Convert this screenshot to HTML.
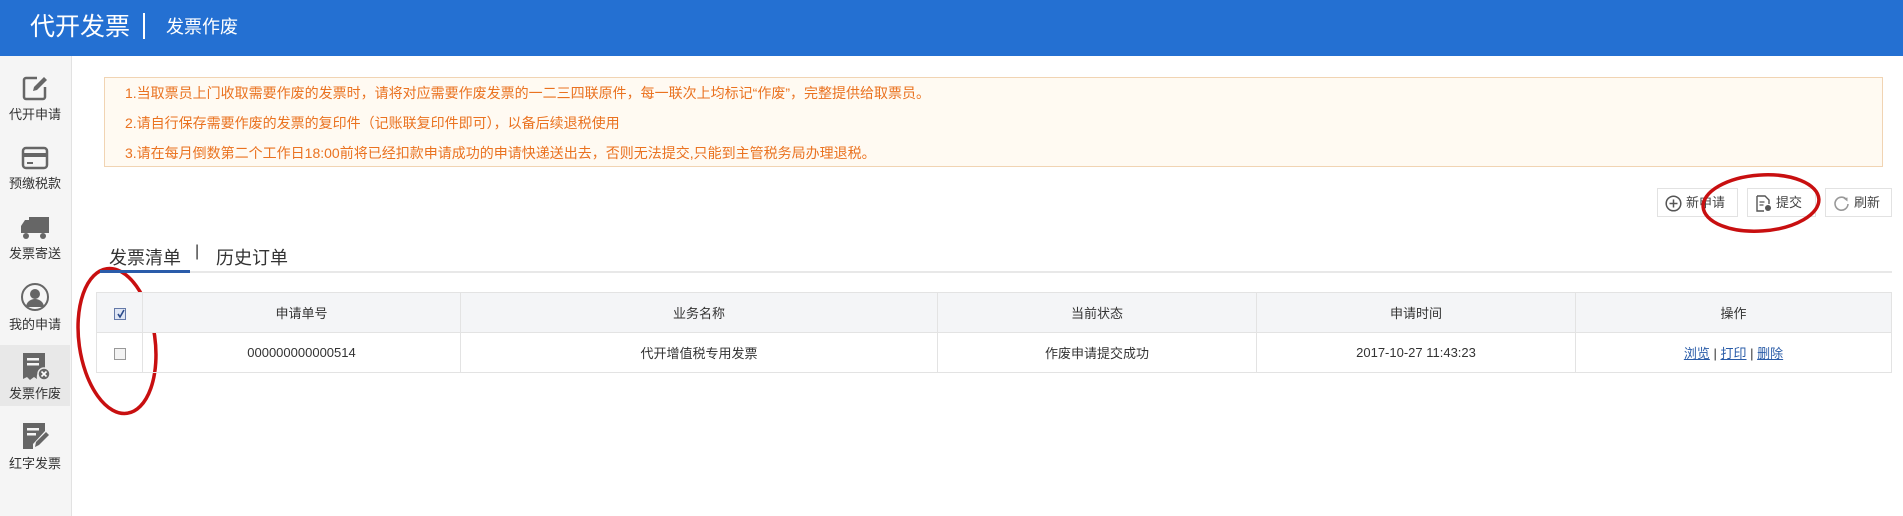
<!DOCTYPE html>
<html><head><meta charset="utf-8"><style>
*{margin:0;padding:0;box-sizing:border-box}
body{width:1903px;height:516px;overflow:hidden;background:#fff;font-family:"Liberation Sans","Noto Sans CJK SC",sans-serif;position:relative}
.hdr{position:absolute;left:0;top:0;width:1903px;height:56px;background:#2470d2;color:#fff}
.t1{position:absolute;left:30px;top:11px;font-size:25px;line-height:32px}
.sep{position:absolute;left:143px;top:13px;width:2px;height:26px;background:#fff}
.t2{position:absolute;left:166px;top:14px;font-size:18px;line-height:26px}
.side{position:absolute;left:0;top:56px;width:72px;height:460px;background:#f5f5f5;border-right:1px solid #e2e2e2}
.it{position:absolute;left:0;width:70px;text-align:center;font-size:13px;color:#333}
.it svg{display:block;margin:0 auto 2px}
.note{position:absolute;left:104px;top:77px;width:1779px;height:90px;background:#fffaf2;border:1px solid #f1d4b3;color:#ea7220;font-size:14px}
.note div{position:absolute;left:20px}
.btn{position:absolute;top:188px;height:29px;border:1px solid #e2e2e2;background:#fff;font-size:13px;color:#444;line-height:27px;padding-left:28px}
.btn svg{position:absolute;left:7px;top:6px}
.tab{position:absolute;top:244px;font-size:18px;color:#333}
table{position:absolute;left:96px;top:292px;width:1796px;border-collapse:collapse;font-size:13px;color:#333;text-align:center}
td{border:1px solid #e3e3e3;height:40px}
tr.h td{background:#f4f5f7}
.cb{display:inline-block;width:12px;height:12px;border:1px solid #999;background:#f3f3f3;vertical-align:middle;position:relative}
a{color:#2a5ca8;text-decoration:underline}
</style></head><body>
<div class="hdr"><div class="t1">代开发票</div><div class="sep"></div><div class="t2">发票作废</div></div>
<div class="side">
<div class="it" style="top:18px"><svg width="28" height="28" viewBox="0 0 28 28"><path d="M16 4H5a2 2 0 0 0-2 2v17a2 2 0 0 0 2 2h17a2 2 0 0 0 2-2V13" fill="none" stroke="#666" stroke-width="2.5"/><path d="M12 17l1-4 10-10 3 3-10 10z" fill="#666"/></svg>代开申请</div>
<div class="it" style="top:89px"><svg width="28" height="26" viewBox="0 0 28 26"><rect x="2" y="3" width="24" height="20" rx="3" fill="none" stroke="#666" stroke-width="2.5"/><rect x="2" y="8" width="24" height="4" fill="#666"/><rect x="6" y="17" width="6" height="2" fill="#666"/></svg>预缴税款</div>
<div class="it" style="top:159px"><svg width="30" height="26" viewBox="0 0 30 26"><rect x="9" y="2" width="20" height="16" fill="#666"/><path d="M1 11l4-6h4v13H1z" fill="#666"/><circle cx="6" cy="21" r="3" fill="#666"/><circle cx="23" cy="21" r="3" fill="#666"/></svg>发票寄送</div>
<div class="it" style="top:226px"><svg width="30" height="30" viewBox="0 0 30 30"><circle cx="15" cy="15" r="13" fill="none" stroke="#666" stroke-width="2"/><circle cx="15" cy="12" r="5" fill="#666"/><path d="M6 25a9 8 0 0 1 18 0z" fill="#666"/></svg>我的申请</div>
<div class="it" style="top:289px;background:#e8e8e8;height:61px;padding-top:6px"><svg width="30" height="30" viewBox="0 0 30 30"><path d="M3 2h22v16a8 8 0 0 0-8 10l-3-2-4 3-3-3-4 2z" fill="#666"/><rect x="7" y="7" width="12" height="2.5" fill="#f5f5f5"/><rect x="7" y="12" width="12" height="2.5" fill="#f5f5f5"/><circle cx="24" cy="23" r="6" fill="#666" stroke="#e8e8e8" stroke-width="1.5"/><path d="M21.5 20.5l5 5M26.5 20.5l-5 5" stroke="#fff" stroke-width="1.6"/></svg>发票作废</div>
<div class="it" style="top:365px"><svg width="30" height="30" viewBox="0 0 30 30"><path d="M3 2h22v8L13 23v5H3z" fill="#666"/><rect x="7" y="7" width="12" height="2.5" fill="#f5f5f5"/><rect x="7" y="12" width="9" height="2.5" fill="#f5f5f5"/><path d="M15 26l1-5 10-10 3 3-10 10z" fill="#666"/></svg>红字发票</div>
</div>
<div class="note">
<div style="top:5px">1.当取票员上门收取需要作废的发票时，请将对应需要作废发票的一二三四联原件，每一联次上均标记“作废”，完整提供给取票员。</div>
<div style="top:35px">2.请自行保存需要作废的发票的复印件（记账联复印件即可），以备后续退税使用</div>
<div style="top:65px">3.请在每月倒数第二个工作日18:00前将已经扣款申请成功的申请快递送出去，否则无法提交,只能到主管税务局办理退税。</div>
</div>
<div class="btn" style="left:1657px;width:81px"><svg width="17" height="17" viewBox="0 0 17 17"><circle cx="8.5" cy="8.5" r="7.3" fill="none" stroke="#555" stroke-width="1.5"/><path d="M8.5 4.5v8M4.5 8.5h8" stroke="#555" stroke-width="1.5"/></svg>新申请</div>
<div class="btn" style="left:1747px;width:69px"><svg width="17" height="17" viewBox="0 0 17 17"><path d="M2 1h8l4 4v4M9 16H2V1" fill="none" stroke="#555" stroke-width="1.4"/><path d="M4.5 7h5M4.5 10h4" stroke="#555" stroke-width="1.3"/><circle cx="13" cy="13" r="3" fill="#555"/></svg>提交</div>
<div class="btn" style="left:1825px;width:67px"><svg width="17" height="17" viewBox="0 0 17 17"><path d="M13.5 4.5A6.5 6.5 0 1 0 15 9" fill="none" stroke="#999" stroke-width="1.6"/><path d="M10.5 3.5l4-1v4z" fill="#999"/></svg>刷新</div>
<svg style="position:absolute;left:0;top:0" width="1903" height="516"><ellipse cx="1761" cy="203" rx="58" ry="28" fill="none" stroke="#c80f10" stroke-width="3.5" transform="rotate(-4 1761 203)"/><ellipse cx="117" cy="341" rx="38" ry="73" fill="none" stroke="#c80f10" stroke-width="3.5" transform="rotate(-8 117 341)"/></svg>
<div class="tab" style="left:109px">发票清单</div>
<div class="tab" style="left:195px;top:243px;font-size:16px">|</div>
<div class="tab" style="left:216px">历史订单</div>
<div style="position:absolute;left:100px;top:271px;width:1792px;height:2px;background:#e8e8e8"></div>
<div style="position:absolute;left:100px;top:270px;width:90px;height:3px;background:#2a5caa"></div>
<table>
<tr class="h"><td style="width:46px"><span class="cb" style="border-color:#6479a8;background:#dfe6f4"><svg style="position:absolute;left:1px;top:0" width="10" height="10" viewBox="0 0 10 10"><path d="M2 5l2 3 4-7" fill="none" stroke="#2a4a8a" stroke-width="1.6"/></svg></span></td><td style="width:318px">申请单号</td><td style="width:477px">业务名称</td><td style="width:319px">当前状态</td><td style="width:319px">申请时间</td><td>操作</td></tr>
<tr><td><span class="cb"></span></td><td>000000000000514</td><td>代开增值税专用发票</td><td>作废申请提交成功</td><td>2017-10-27 11:43:23</td><td><a>浏览</a> | <a>打印</a> | <a>删除</a></td></tr>
</table>
</body></html>
